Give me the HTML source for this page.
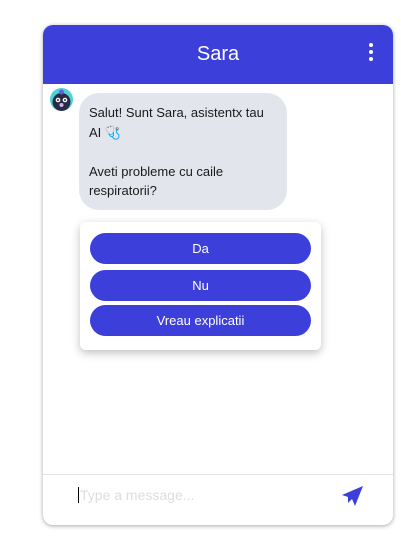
<!DOCTYPE html>
<html><head><meta charset="utf-8"><style>
*{box-sizing:border-box;margin:0;padding:0}
body{width:401px;height:549px;background:#fff;font-family:"Liberation Sans",sans-serif;position:relative;overflow:hidden}
.w{position:absolute;left:43px;top:25px;width:350px;height:500px;border-radius:10px;background:#fff;box-shadow:0 1px 4px rgba(0,0,0,.35);overflow:hidden}
.h{height:59px;background:#3d3fdb;color:#fff;font-size:20px;text-align:center;line-height:59px}
.dots{position:absolute;right:20px;top:18px;width:4px}
.dots i{display:block;width:4px;height:4px;border-radius:2px;background:#fff;margin-bottom:3px}
.av{position:absolute;left:7px;top:63px;width:23px;height:23px;border-radius:50%;background:#4fd1d9;overflow:hidden}
.bub{position:absolute;left:36px;top:68px;width:208px;height:117px;background:#e2e6ec;border-radius:20px;padding:10px 10px;font-size:13px;line-height:19.5px;color:#1a1a1a}
.card{position:absolute;left:37px;top:197px;width:241px;height:128px;background:#fff;border-radius:6px;box-shadow:0 3px 9px rgba(0,0,0,.25)}
.b{position:absolute;left:10px;width:221px;height:31px;border-radius:16px;background:#3d3fdb;color:#fff;font-size:13px;text-align:center;line-height:31px}
.line{position:absolute;left:0;right:0;top:449px;height:1px;background:#e4e4ea}
.in{position:absolute;left:35px;top:462px;font-size:14px;color:#ddd;border-left:1px solid #000;padding-left:1px;line-height:16px}
</style></head><body>
<div class="w">
<div class="h">Sara</div>
<div class="dots"><i></i><i></i><i></i></div>
<div class="av"><svg width="23" height="23" viewBox="0 0 23 23"><ellipse cx="11.5" cy="14" rx="9" ry="9" fill="#2a2a45"/><circle cx="11.5" cy="4" r="2.5" fill="#6b5fd6"/><circle cx="8" cy="12" r="2.3" fill="#fff"/><circle cx="15" cy="12" r="2.3" fill="#fff"/><circle cx="8" cy="12" r="1" fill="#2a2a45"/><circle cx="15" cy="12" r="1" fill="#2a2a45"/><circle cx="11.5" cy="17" r="2" fill="#c9b6f0"/></svg></div>
<div class="bub">Salut! Sunt Sara, asistentx tau<br>AI 🩺<br><br>Aveti probleme cu caile<br>respiratorii?</div>
<div class="card">
<div class="b" style="top:11px">Da</div>
<div class="b" style="top:48px">Nu</div>
<div class="b" style="top:83px">Vreau explicatii</div>
</div>
<div class="line"></div>
<div class="in">Type a message...</div>
<svg style="position:absolute;left:299px;top:461px" width="21" height="20" viewBox="0 0 21 20"><path d="M0 9 L21 0 L13 20 L10 13 L6 17 L6 11 Z" fill="#3d3fdb"/></svg>
</div>
</body></html>
